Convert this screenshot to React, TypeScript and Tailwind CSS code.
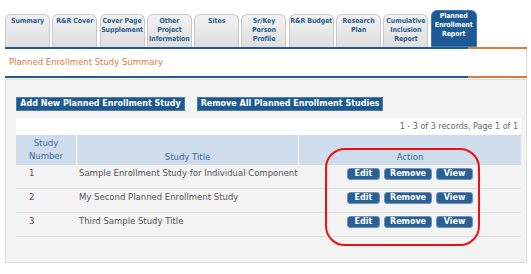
import React from "react";

const tabs = [
  "Summary",
  "R&R Cover",
  "Cover Page Supplement",
  "Other Project Information",
  "Sites",
  "Sr/Key Person Profile",
  "R&R Budget",
  "Research Plan",
  "Cumulative Inclusion Report",
  "Planned Enrollment Report",
];

const rows = [
  { n: 1, title: "Sample Enrollment Study for Individual Component" },
  { n: 2, title: "My Second Planned Enrollment Study" },
  { n: 3, title: "Third Sample Study Title" },
];

function RowButton({ label, w }: { label: string; w: string }) {
  return (
    <span
      className={`${w} h-[12px] flex items-center justify-center rounded-[3px] bg-[#2a5f94] border border-[#6d93ba] text-white text-[8px] font-bold leading-none`}
    >
      {label}
    </span>
  );
}

function Rule() {
  return (
    <div className="flex h-[2px]">
      <div className="flex-1 bg-[#1d5a96]" />
      <div className="w-[59px] bg-[#e07a3c]" />
    </div>
  );
}

export default function App() {
  return (
    <div className="w-[531px] h-[274px] bg-white font-['DejaVu_Sans',sans-serif] relative overflow-hidden">
      <div className="pl-[5px] pr-[4px] pt-[10px]">
        {/* Tabs */}
        <div className="flex items-end gap-[2.3px] h-[37px] font-['DejaVu_Sans_Condensed','DejaVu_Sans',sans-serif]">
          {tabs.map((t, i) => {
            const active = i === tabs.length - 1;
            return (
              <div
                key={t}
                className={
                  active
                    ? "w-[46px] h-[37px] rounded-t-[6px] bg-[#1c5995] border border-[#3f78b0] text-white text-[7px] font-bold leading-[9px] tracking-[-0.1px] text-center pt-[1px]"
                    : "w-[45px] h-[33px] rounded-t-[6px] bg-gradient-to-b from-[#f2f2f2] to-[#dedede] border border-[#c9c9c9] border-b-0 text-[#2e5f8e] text-[7px] font-bold leading-[9px] tracking-[-0.1px] text-center pt-[2px]"
                }
              >
                {t}
              </div>
            );
          })}
        </div>
        <Rule />
        <div className="h-[27px] bg-white border-r border-[#dcdcdc] flex items-center pl-[4px] text-[8.5px] text-[#e27a45]">
          Planned Enrollment Study Summary
        </div>
        <Rule />

        {/* Main panel */}
        <div className="mt-[1px] h-[184px] bg-[#f3f3f3] border border-[#dddddd] pl-[10px] pr-[5px] pt-[17px]">
          <div className="flex gap-[12px]">
            <span className="w-[169px] h-[14px] flex items-center justify-center bg-[#1f5a8e] border border-[#4b7cab] text-white text-[8px] font-bold">
              Add New Planned Enrollment Study
            </span>
            <span className="w-[186px] h-[14px] flex items-center justify-center bg-[#1f5a8e] border border-[#4b7cab] text-white text-[8px] font-bold">
              Remove All Planned Enrollment Studies
            </span>
          </div>

          <div className="mt-[7px]">
            <div className="h-[17px] bg-white flex items-center justify-end pr-[3px] text-[8px] text-[#666]">
              1 - 3 of 3 records, Page 1 of 1
            </div>
            <div className="grid grid-cols-[61px_222px_1fr] h-[30px] bg-[#cfdcec] text-[8.5px] text-[#3d6b9e] leading-[13px]">
              <div className="border-r border-white flex items-center justify-center text-center">
                Study
                <br />
                Number
              </div>
              <div className="border-r border-white flex items-end justify-center pb-[1px]">Study Title</div>
              <div className="flex items-end justify-center pb-[1px]">Action</div>
            </div>
            {rows.map((r) => (
              <div
                key={r.n}
                className="grid grid-cols-[61px_222px_1fr] h-[24px] border-b border-[#dedede] text-[8.5px] text-[#555]"
              >
                <div className="pl-[13px] pt-[2px]">{r.n}</div>
                <div className="pl-[2px] pt-[2px]">{r.title}</div>
                <div className="flex justify-center gap-[4px] pt-[3px]">
                  <RowButton label="Edit" w="w-[33px]" />
                  <RowButton label="Remove" w="w-[48px]" />
                  <RowButton label="View" w="w-[37px]" />
                </div>
              </div>
            ))}
          </div>
        </div>
      </div>

      {/* Red highlight */}
      <div className="absolute left-[325px] top-[148px] w-[155px] h-[98px] border-2 border-[#ee1111] rounded-[20px]" />
    </div>
  );
}
